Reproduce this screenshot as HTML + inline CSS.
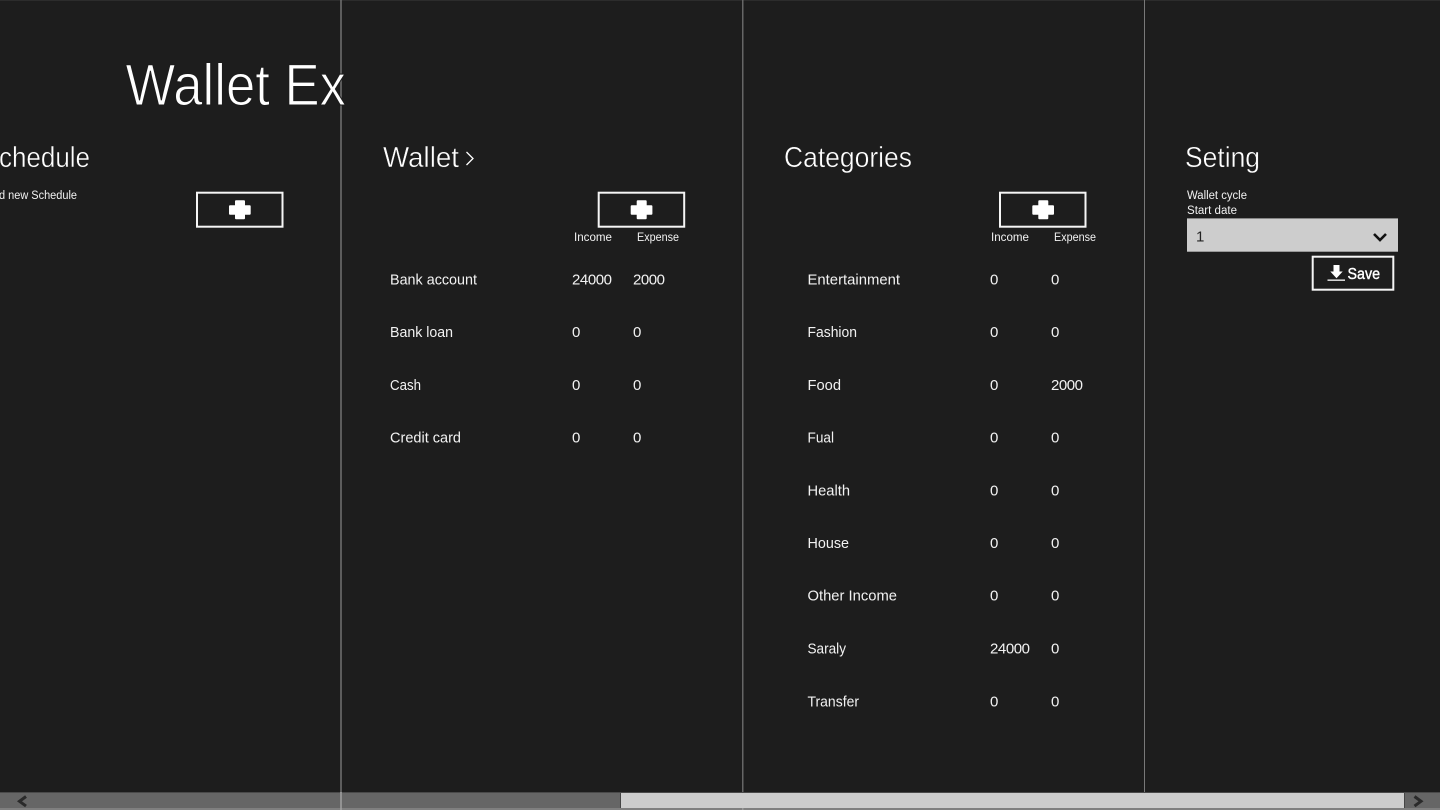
<!DOCTYPE html>
<html><head><meta charset="utf-8"><style>
html,body{margin:0;padding:0;background:#1d1d1d;width:1440px;height:810px;overflow:hidden}
svg{display:block;position:absolute;left:0;top:0}
text{font-family:"Liberation Sans",sans-serif;fill:#f2f2f2}
.i{font-size:15px}
.s{font-size:11.5px}
.h{font-size:29px;fill:#fff;stroke:#1d1d1d;stroke-width:.45px}
</style></head><body>
<svg width="1440" height="810" viewBox="0 0 1440 810">
<rect width="1440" height="810" fill="#1d1d1d"/>
<rect y="0" width="1440" height="1" fill="#2c2c2c"/>
<g fill="#787878"><rect x="340.300" width="1.400" height="792"/><rect x="742.200" width="1.200" height="792"/><rect x="1144" width="1" height="792"/></g>
<text x="125.500" y="105" font-size="58" textLength="220.500" lengthAdjust="spacingAndGlyphs" style="fill:#fff;stroke:#1d1d1d;stroke-width:1.100px">Wallet Ex</text>
<text class="h" x="-1" y="167" textLength="91" lengthAdjust="spacingAndGlyphs">chedule</text>
<text class="s" x="-1" y="199" textLength="78" lengthAdjust="spacingAndGlyphs">d new Schedule</text>
<text class="h" x="383" y="167" textLength="76" lengthAdjust="spacingAndGlyphs">Wallet</text>
<path d="M466.500 152l6.500 6.500-6.500 6.500" fill="none" stroke="#fff" stroke-width="1.300"/>
<text class="h" x="784" y="167" textLength="128" lengthAdjust="spacingAndGlyphs">Categories</text>
<text class="h" x="1185" y="167" textLength="75" lengthAdjust="spacingAndGlyphs">Seting</text>
<g fill="none" stroke="#f5f5f5" stroke-width="2"><rect x="197" y="192.700" width="85.500" height="34"/><rect x="598.700" y="192.700" width="85.500" height="34"/><rect x="1000" y="192.700" width="85.500" height="34"/><rect x="1312.700" y="256.700" width="80.600" height="33"/></g>
<g fill="#fff">
<path d="M236 200.200h8a1 1 0 0 1 1 1v4h4.700a1 1 0 0 1 1 1v7.500a1 1 0 0 1-1 1h-4.700v3.600a1 1 0 0 1-1 1h-8a1 1 0 0 1-1-1v-3.600h-5a1 1 0 0 1-1-1v-7.500a1 1 0 0 1 1-1h5v-4a1 1 0 0 1 1-1z"/>
<path d="M637.700 200.200h8a1 1 0 0 1 1 1v4h4.700a1 1 0 0 1 1 1v7.500a1 1 0 0 1-1 1h-4.700v3.600a1 1 0 0 1-1 1h-8a1 1 0 0 1-1-1v-3.600h-5a1 1 0 0 1-1-1v-7.500a1 1 0 0 1 1-1h5v-4a1 1 0 0 1 1-1z"/>
<path d="M1039.300 200.200h8a1 1 0 0 1 1 1v4h4.700a1 1 0 0 1 1 1v7.500a1 1 0 0 1-1 1h-4.700v3.600a1 1 0 0 1-1 1h-8a1 1 0 0 1-1-1v-3.600h-5a1 1 0 0 1-1-1v-7.500a1 1 0 0 1 1-1h5v-4a1 1 0 0 1 1-1z"/>
</g>
<text class="s" x="574" y="241" textLength="38" lengthAdjust="spacingAndGlyphs">Income</text>
<text class="s" x="637" y="241" textLength="42" lengthAdjust="spacingAndGlyphs">Expense</text>
<text class="s" x="991" y="241" textLength="38" lengthAdjust="spacingAndGlyphs">Income</text>
<text class="s" x="1054" y="241" textLength="42" lengthAdjust="spacingAndGlyphs">Expense</text>
<text class="s" x="1187" y="199" textLength="60" lengthAdjust="spacingAndGlyphs">Wallet cycle</text>
<text class="s" x="1187" y="214" textLength="50" lengthAdjust="spacingAndGlyphs">Start date</text>
<text class="i" x="390" y="284.500" textLength="87" lengthAdjust="spacingAndGlyphs">Bank account</text>
<text class="i" x="572" y="284.500" textLength="40">24000</text><text class="i" x="633" y="284.500" textLength="32">2000</text>
<text class="i" x="390" y="337" textLength="63" lengthAdjust="spacingAndGlyphs">Bank loan</text>
<text class="i" x="572" y="337">0</text><text class="i" x="633" y="337">0</text>
<text class="i" x="390" y="390" textLength="31" lengthAdjust="spacingAndGlyphs">Cash</text>
<text class="i" x="572" y="390">0</text><text class="i" x="633" y="390">0</text>
<text class="i" x="390" y="442.500" textLength="71" lengthAdjust="spacingAndGlyphs">Credit card</text>
<text class="i" x="572" y="442.500">0</text><text class="i" x="633" y="442.500">0</text>
<text class="i" x="807.500" y="284.500" textLength="92.500" lengthAdjust="spacingAndGlyphs">Entertainment</text>
<text class="i" x="990" y="284.500">0</text><text class="i" x="1051" y="284.500">0</text>
<text class="i" x="807.500" y="337" textLength="49.500" lengthAdjust="spacingAndGlyphs">Fashion</text>
<text class="i" x="990" y="337">0</text><text class="i" x="1051" y="337">0</text>
<text class="i" x="807.500" y="390" textLength="33.500" lengthAdjust="spacingAndGlyphs">Food</text>
<text class="i" x="990" y="390">0</text><text class="i" x="1051" y="390" textLength="32">2000</text>
<text class="i" x="807.500" y="442.500" textLength="26.500" lengthAdjust="spacingAndGlyphs">Fual</text>
<text class="i" x="990" y="442.500">0</text><text class="i" x="1051" y="442.500">0</text>
<text class="i" x="807.500" y="495.500" textLength="42.500" lengthAdjust="spacingAndGlyphs">Health</text>
<text class="i" x="990" y="495.500">0</text><text class="i" x="1051" y="495.500">0</text>
<text class="i" x="807.500" y="548" textLength="41.500" lengthAdjust="spacingAndGlyphs">House</text>
<text class="i" x="990" y="548">0</text><text class="i" x="1051" y="548">0</text>
<text class="i" x="807.500" y="600.500" textLength="89.500" lengthAdjust="spacingAndGlyphs">Other Income</text>
<text class="i" x="990" y="600.500">0</text><text class="i" x="1051" y="600.500">0</text>
<text class="i" x="807.500" y="653.500" textLength="38.500" lengthAdjust="spacingAndGlyphs">Saraly</text>
<text class="i" x="990" y="653.500" textLength="40">24000</text><text class="i" x="1051" y="653.500">0</text>
<text class="i" x="807.500" y="706.500" textLength="51.500" lengthAdjust="spacingAndGlyphs">Transfer</text>
<text class="i" x="990" y="706.500">0</text><text class="i" x="1051" y="706.500">0</text>
<rect x="1187" y="218.400" width="211" height="33.300" fill="#cdcdcd"/>
<text x="1196" y="241.500" font-size="15" style="fill:#222">1</text>
<path d="M1374 234l6 6 6-6" fill="none" stroke="#111" stroke-width="2.600"/>
<path d="M1333.500 265h6v6.500h3.200l-6.200 6.800-6.200-6.800h3.200z" fill="#fff"/>
<rect x="1327.500" y="279.500" width="17.500" height="1.300" fill="#fff"/>
<text x="1347.500" y="279" font-size="16" textLength="32.500" lengthAdjust="spacingAndGlyphs" style="fill:#fff;stroke:#fff;stroke-width:.4px">Save</text>
<rect y="792" width="1440" height="18" fill="#666"/>
<rect y="792" width="1440" height="1" fill="#4a4a4a"/>
<rect x="340" y="792" width="2" height="18" fill="#929292"/>
<rect x="620.700" y="793" width="783.300" height="15" fill="#cdcdcd"/>
<rect x="620" y="793" width="1" height="15" fill="#454545"/>
<rect x="1404" y="793" width="1" height="15" fill="#454545"/>
<rect y="808" width="1440" height="2" fill="#808080"/>
<rect x="340" y="808" width="2" height="2" fill="#9a9a9a"/>
<rect x="742" y="808" width="1.500" height="2" fill="#9a9a9a"/>
<path d="M26 796.500l-6.500 4.800 6.500 4.800M1414.500 796.500l6.500 4.800-6.500 4.800" fill="none" stroke="#2a2a2a" stroke-width="3"/>
</svg>
</body></html>
